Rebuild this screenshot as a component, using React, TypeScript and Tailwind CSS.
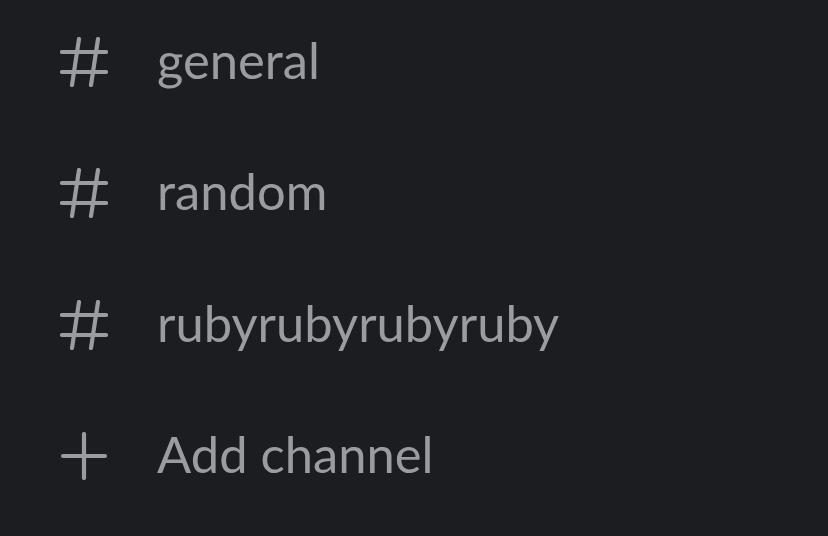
import type { JSX } from "react";

const channels = ["general", "random", "rubyrubyrubyruby"];

function HashIcon(): JSX.Element {
    return (
        <svg width="48" height="50" viewBox="0 0 48 50" fill="none" stroke="currentColor" strokeWidth="4.2" strokeLinecap="round">
            <line x1="2" y1="15" x2="46" y2="15" />
            <line x1="2" y1="35" x2="46" y2="35" />
            <line x1="19" y1="2" x2="12" y2="48" />
            <line x1="38" y1="2" x2="31" y2="48" />
        </svg>
    );
}

function PlusIcon(): JSX.Element {
    return (
        <svg width="48" height="48" viewBox="0 0 48 48" fill="none" stroke="currentColor" strokeWidth="4.2" strokeLinecap="round">
            <line x1="3" y1="24" x2="45" y2="24" />
            <line x1="24" y1="2" x2="24" y2="46" />
        </svg>
    );
}

export default function App(): JSX.Element {
    return (
        <div className="w-[828px] h-[536px] overflow-hidden bg-[#1b1d21] text-[#9b9c9f] font-['Lato',sans-serif]">
            <div className="flex flex-col mt-[-4px]">
                {channels.map((name) => (
                    <div key={name} className="flex items-center h-[131.5px] pl-[60px]">
                        <span className="flex w-[97px]"><HashIcon /></span>
                        <span className="text-[50.7px] leading-none mt-[-3px]">{name}</span>
                    </div>
                ))}
                <div className="flex items-center h-[131.5px] pl-[60px]">
                    <span className="flex w-[97px]"><PlusIcon /></span>
                    <span className="text-[50.7px] leading-none mt-[-3px]">Add channel</span>
                </div>
            </div>
        </div>
    );
}
